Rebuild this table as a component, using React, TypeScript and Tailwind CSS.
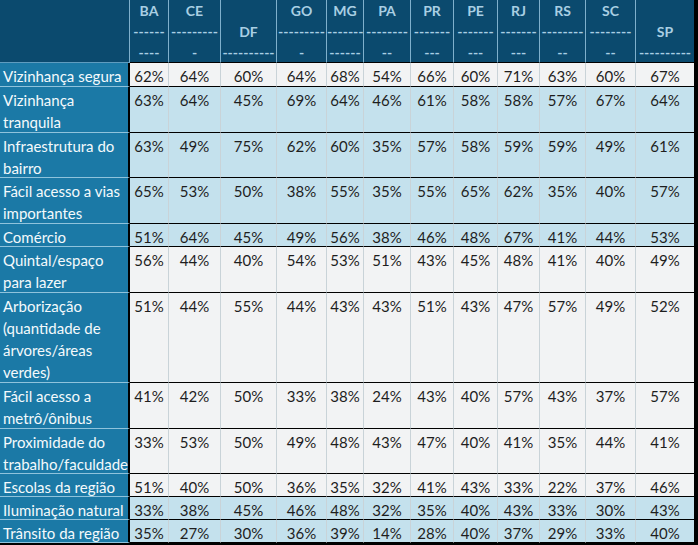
import React from "react";

const cols = [
  { h: ["BA", "------", "----"] },
  { h: ["CE", "---------", "-"] },
  { h: ["", "DF", "----------"] },
  { h: ["GO", "---------", "-"] },
  { h: ["MG", "-------", "------"] },
  { h: ["PA", "--------", "--"] },
  { h: ["PR", "-------", "---"] },
  { h: ["PE", "-------", "---"] },
  { h: ["RJ", "-------", "---"] },
  { h: ["RS", "--------", "--"] },
  { h: ["SC", "--------", "--"] },
  { h: ["", "SP", "----------"] },
];

type Row = { label: string[]; vals: number[]; blue: boolean; h: string };

const rows: Row[] = [
  { label: ["Vizinhança segura"], vals: [62, 64, 60, 64, 68, 54, 66, 60, 71, 63, 60, 67], blue: false, h: "h-[24px]" },
  { label: ["Vizinhança", "tranquila"], vals: [63, 64, 45, 69, 64, 46, 61, 58, 58, 57, 67, 64], blue: true, h: "h-[46px]" },
  { label: ["Infraestrutura do", "bairro"], vals: [63, 49, 75, 62, 60, 35, 57, 58, 59, 59, 49, 61], blue: true, h: "h-[45px]" },
  { label: ["Fácil acesso a vias", "importantes"], vals: [65, 53, 50, 38, 55, 35, 55, 65, 62, 35, 40, 57], blue: true, h: "h-[46px]" },
  { label: ["Comércio"], vals: [51, 64, 45, 49, 56, 38, 46, 48, 67, 41, 44, 53], blue: true, h: "h-[23px]" },
  { label: ["Quintal/espaço", "para lazer"], vals: [56, 44, 40, 54, 53, 51, 43, 45, 48, 41, 40, 49], blue: false, h: "h-[46px]" },
  { label: ["Arborização", "(quantidade de", "árvores/áreas", "verdes)"], vals: [51, 44, 55, 44, 43, 43, 51, 43, 47, 57, 49, 52], blue: false, h: "h-[90px]" },
  { label: ["Fácil acesso a", "metrô/ônibus"], vals: [41, 42, 50, 33, 38, 24, 43, 40, 57, 43, 37, 57], blue: false, h: "h-[46px]" },
  { label: ["Proximidade do", "trabalho/faculdade"], vals: [33, 53, 50, 49, 48, 43, 47, 40, 41, 35, 44, 41], blue: false, h: "h-[45px]" },
  { label: ["Escolas da região"], vals: [51, 40, 50, 36, 35, 32, 41, 43, 33, 22, 37, 46], blue: false, h: "h-[23px]" },
  { label: ["Iluminação natural"], vals: [33, 38, 45, 46, 48, 32, 35, 40, 43, 33, 30, 43], blue: true, h: "h-[23px]" },
  { label: ["Trânsito da região"], vals: [35, 27, 30, 36, 39, 14, 28, 40, 37, 29, 33, 40], blue: true, h: "h-[23px]" },
];

const gridCols =
  "grid grid-cols-[130px_39px_52px_56px_50px_37px_47px_43px_44px_42px_46px_50px_58px]";

export default function App() {
  return (
    <div
      className="w-[698px] h-[545px] overflow-hidden bg-black"
      style={{ fontFamily: "Lato, 'Open Sans', sans-serif" }}
    >
      <div className="w-[694px] border-b-2 border-dotted border-black">
        {/* header */}
        <div className={`${gridCols} h-[63px]`}>
          <div className="bg-[#0b4a6e] border-r border-r-[#7fb0cc] border-b border-b-[#5f9cbf]" />
          {cols.map((c, i) => (
            <div
              key={i}
              className={`bg-[#0b4a6e] border-b border-b-black ${
                i < cols.length - 1 ? "border-r border-r-[#7fb0cc]" : ""
              } overflow-hidden whitespace-nowrap text-center font-bold text-[14px] leading-[21px] text-[#a9cfe3]`}
            >
              {c.h.map((t, j) => (
                <div key={j} className="h-[21px] overflow-hidden">
                  {t || "\u00a0"}
                </div>
              ))}
            </div>
          ))}
        </div>
        {rows.map((r, ri) => (
          <div key={ri} className={`${gridCols} ${r.h}`}>
            <div className="bg-[#1b79a6] text-[#f4f9fc] border-r-2 border-r-black border-b border-b-[#8fc3dc] pl-[3px] pt-[2px] text-[15px] leading-[22px] whitespace-nowrap overflow-hidden">
              {r.label.map((l, j) => (
                <div key={j}>{l}</div>
              ))}
            </div>
            {r.vals.map((v, i) => (
              <div
                key={i}
                className={`${r.blue ? "bg-[#c4e1ed]" : "bg-[#f2f3f4]"} border-b border-b-black ${
                  i < r.vals.length - 1 ? "border-r border-r-[#c9d3d8]" : ""
                } text-center text-[#1e1e1e] pt-[2px] text-[15px] leading-[22px] overflow-hidden`}
              >
                {v}%
              </div>
            ))}
          </div>
        ))}
      </div>
    </div>
  );
}
